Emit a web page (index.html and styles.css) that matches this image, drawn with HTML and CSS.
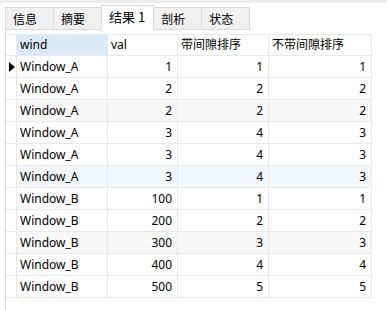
FILE: index.html
```html
<!DOCTYPE html>
<html lang="zh-CN">
<head>
    <meta charset="UTF-8">
    <title>结果 1</title>
    <link rel="stylesheet" href="styles.css">
</head>
<body>
    <div class="top-strip"></div>
    <div class="tabs">
        <div class="tab">信息</div>
        <div class="tab">摘要</div>
        <div class="tab active">结果 1</div>
        <div class="tab">剖析</div>
        <div class="tab">状态</div>
    </div>

    <div class="result">
        <div class="grid" id="grid">
            <div class="cell head rowhead"></div>
            <div class="cell head focus">wind</div>
            <div class="cell head">val</div>
            <div class="cell head">带间隙排序</div>
            <div class="cell head">不带间隙排序</div>
        </div>
    </div>

    <script>
        const grid = document.getElementById('grid');
        const rows = [
            ['Window_A', 1, 1, 1],
            ['Window_A', 2, 2, 2],
            ['Window_A', 2, 2, 2],
            ['Window_A', 3, 4, 3],
            ['Window_A', 3, 4, 3],
            ['Window_A', 3, 4, 3],
            ['Window_B', 100, 1, 1],
            ['Window_B', 200, 2, 2],
            ['Window_B', 300, 3, 3],
            ['Window_B', 400, 4, 4],
            ['Window_B', 500, 5, 5]
        ];
        // row shading as seen in the grid
        const shade = { 2: 'alt', 5: 'hover', 8: 'alt' };

        rows.forEach((row, i) => {
            const extra = shade[i] ? ' ' + shade[i] : '';
            const marker = document.createElement('div');
            marker.className = 'cell rowhead' + extra;
            if (i === 0) marker.innerHTML = '<span class="pointer"></span>';
            grid.appendChild(marker);

            row.forEach((v, j) => {
                const c = document.createElement('div');
                c.className = 'cell' + (j > 0 ? ' num' : '') + extra;
                c.textContent = v;
                grid.appendChild(c);
            });
        });
    </script>
</body>
</html>
```

FILE: styles.css
```css
body {
    margin: 0;
    background: #fff;
    font-family: "Noto Sans", "Noto Sans CJK SC", sans-serif;
    font-size: 12px;
    color: #000;
}

.top-strip {
    height: 3px;
    background: #ececec;
}

.tabs {
    display: flex;
    align-items: flex-end;
    padding-left: 5px;
    height: 27px;
}
.tab {
    box-sizing: border-box;
    height: 23px;
    line-height: 21px;
    padding: 0 16px 0 7px;
    margin-right: -1px;
    background: #f0f0f0;
    border: 1px solid #dadada;
    font-family: "Noto Sans CJK SC", sans-serif;
    font-size: 12px;
}
.tab.active {
    position: relative;
    height: 26px;
    line-height: 22px;
    padding-right: 8px;
    margin-bottom: -1px;
    background: #fff;
    border-bottom-color: #fff;
    font-size: 13px;
    z-index: 1;
}

.result {
    margin-left: 5px;
    border-left: 1px solid #d9d9d9;
    padding-top: 4px;
    height: 276px;
}

.grid {
    display: grid;
    grid-template-columns: 11px 91px 70px 91px 103px;
    grid-auto-rows: 22px;
}
.cell {
    box-sizing: border-box;
    border-right: 1px solid #e8e8e8;
    border-bottom: 1px solid #e8e8e8;
    padding: 0 3px;
    line-height: 21px;
    white-space: nowrap;
    overflow: hidden;
    background: #fff;
}
.cell.head {
    border-top: 1px solid #e8e8e8;
    line-height: 20px;
    font-family: "Noto Sans", "Noto Sans CJK SC", sans-serif;
}
.cell.head.focus {
    background: #dbe9f7;
}
.cell.num {
    text-align: right;
    padding-right: 5px;
}
.cell.alt {
    background: #f7f7f7;
}
.cell.hover {
    background: #f2f7fc;
}
.cell.rowhead {
    padding: 0;
    background: #fff;
    display: flex;
    align-items: center;
    justify-content: center;
}
.pointer {
    width: 0;
    height: 0;
    border-top: 5px solid transparent;
    border-bottom: 5px solid transparent;
    border-left: 6px solid #000;
    margin-left: 1px;
}
```
